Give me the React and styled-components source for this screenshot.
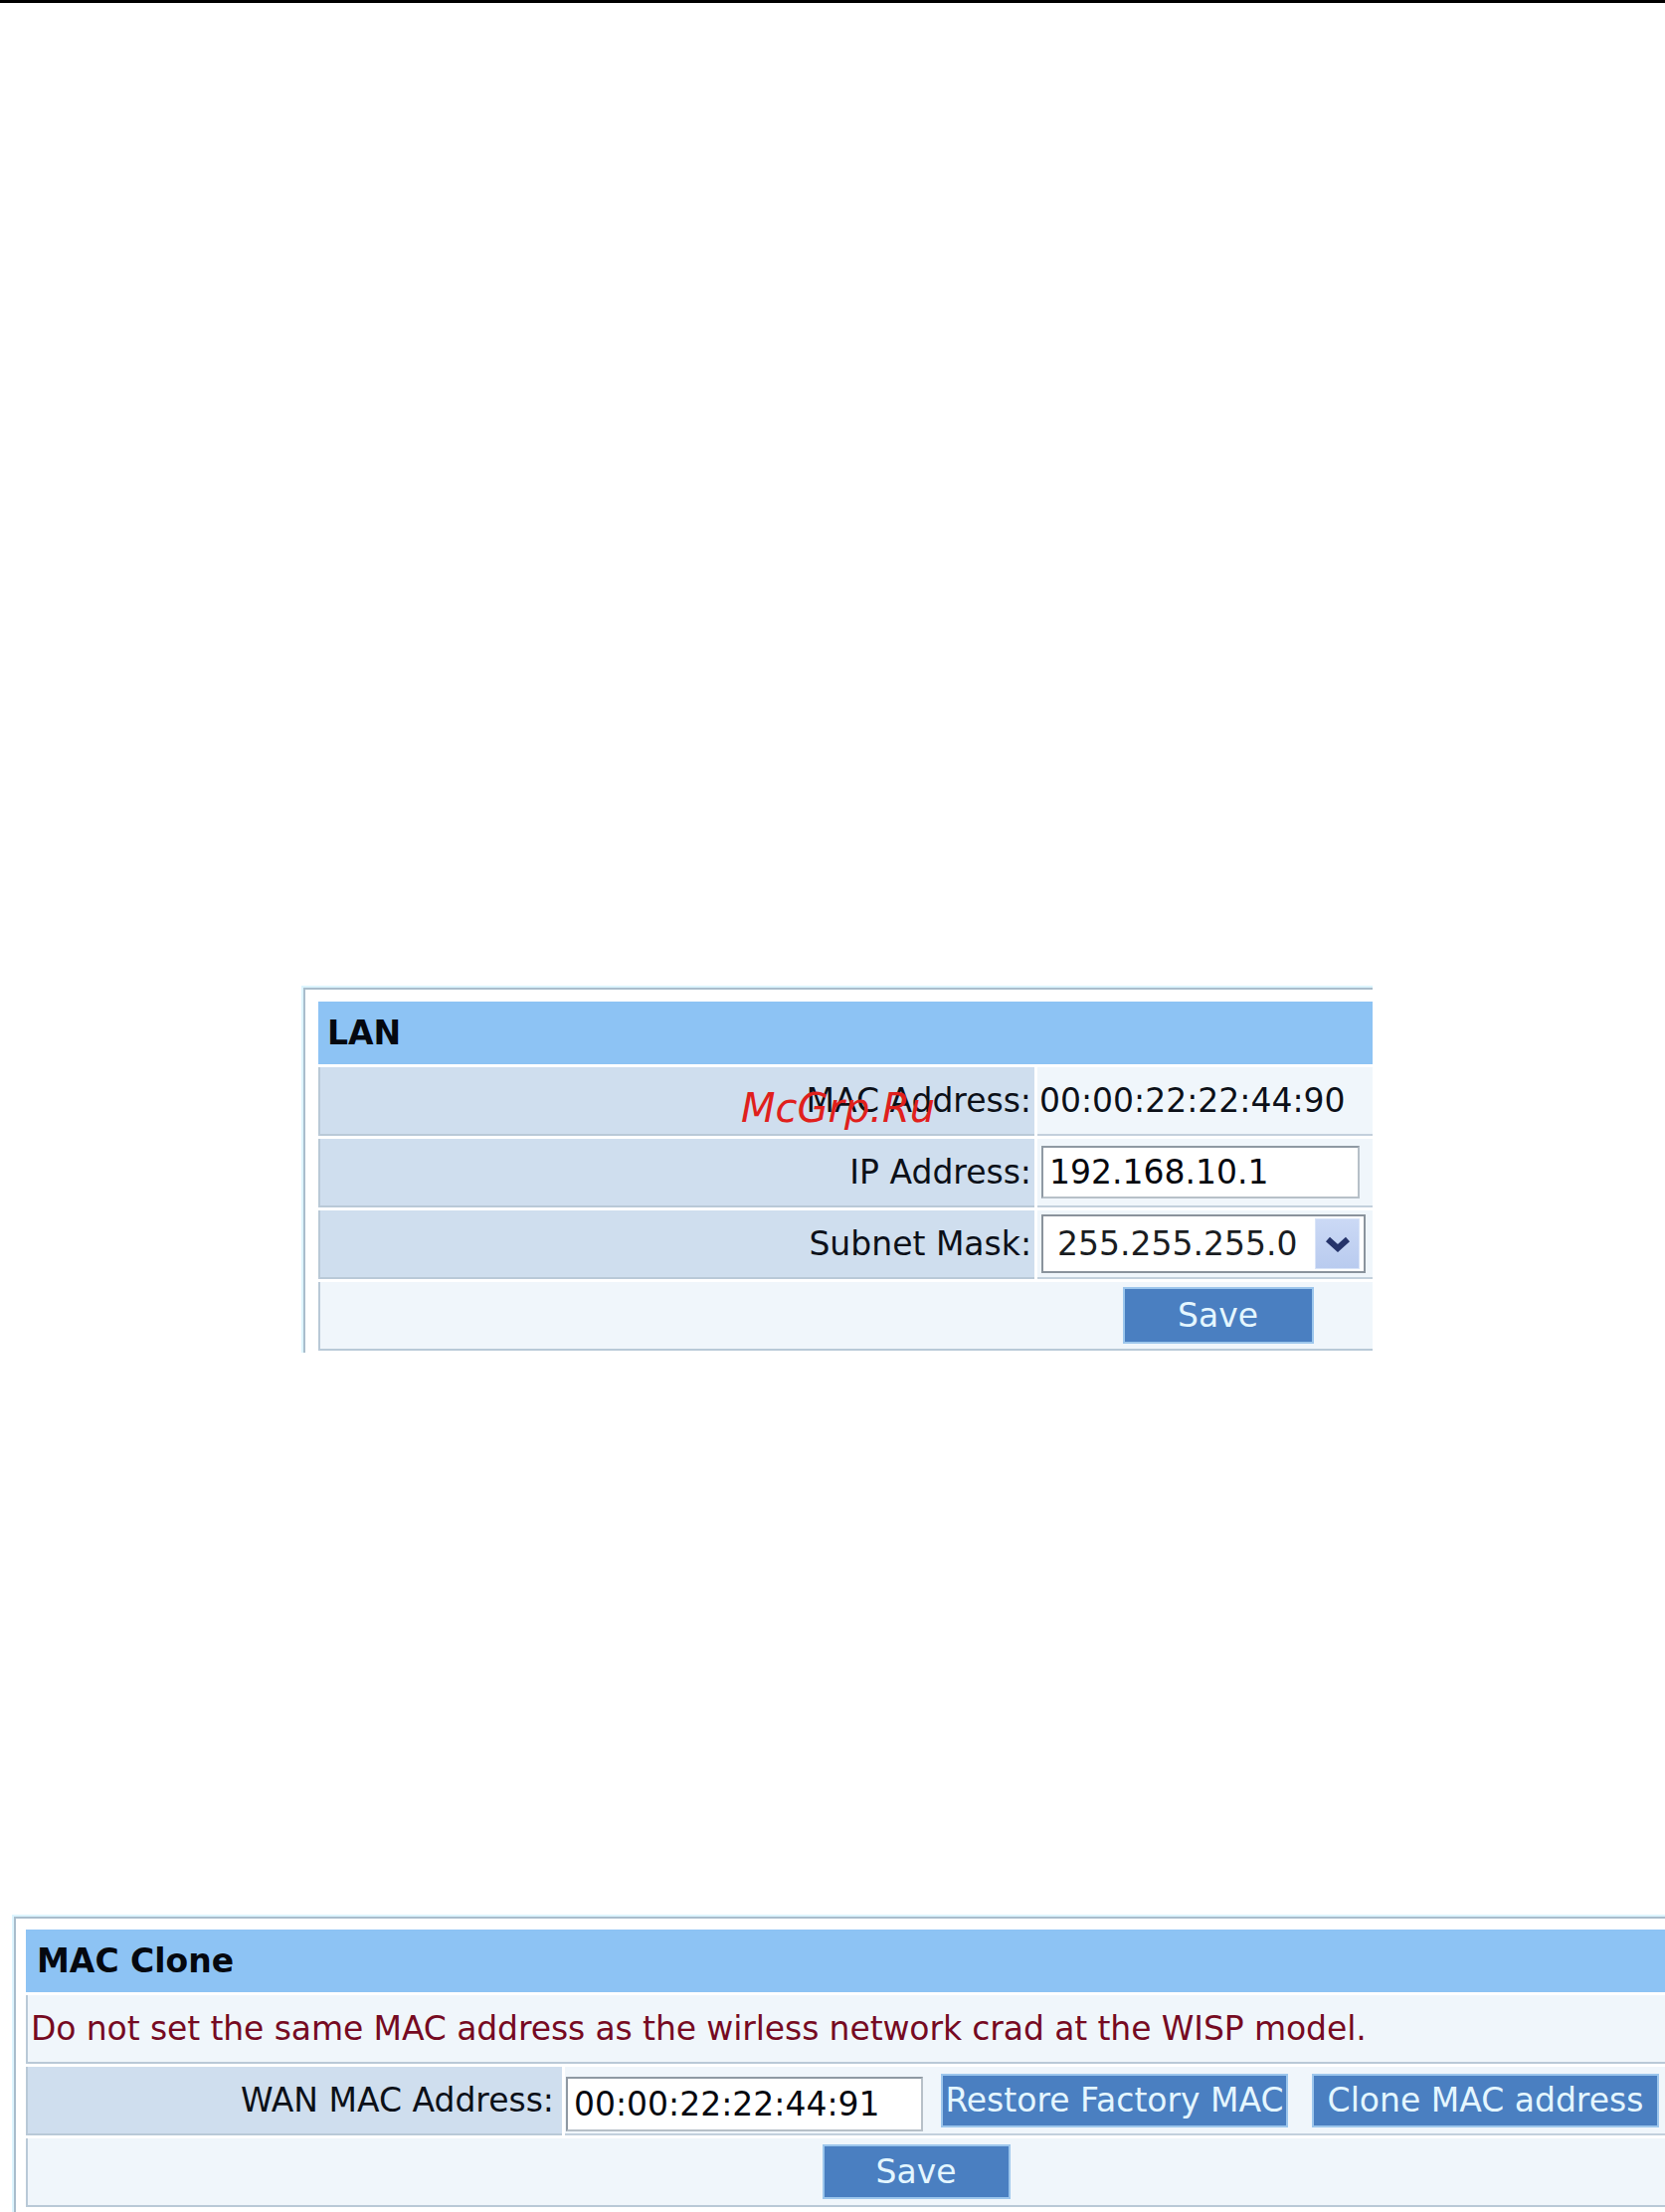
import React from "react";
import styled, { createGlobalStyle } from "styled-components";

const GlobalStyle = createGlobalStyle`
  html, body {
    margin: 0;
    padding: 0;
    background: #ffffff;
  }
  body {
    font-family: "DejaVu Sans", Verdana, sans-serif;
    color: #0c1018;
  }
`;

const Page = styled.div`
  width: 1674px;
  height: 2224px;
  overflow: hidden;
`;

const TopRule = styled.div`
  height: 3px;
  background: #000;
`;

// window onto a settings panel, the panel itself runs past its edges
const Clip = styled.section`
  position: relative;
  box-sizing: border-box;
  width: ${p => p.$w}px;
  height: ${p => p.$h}px;
  margin: ${p => p.$top}px 0 0 ${p => p.$left}px;
  padding: 2px 0 0 2px;
  overflow: hidden;
`;

const Panel = styled.div`
  width: max-content;
  background: #fff;
  border: 2px solid #a9bdcc;
  box-shadow: 0 0 0 2px #ddf5ff;
  padding: ${p => p.$pad};
`;

const Table = styled.div`
  display: flex;
  flex-direction: column;
  gap: 3px;
  width: ${p => p.$w}px;
`;

const Title = styled.div`
  height: 63px;
  display: flex;
  align-items: center;
  padding-left: ${p => p.$indent}px;
  background: #8dc3f4;
  font-weight: bold;
  font-size: 33px;
  color: #05080f;
`;

const Row = styled.div`
  display: grid;
  grid-template-columns: ${p => p.$label}px 1fr;
  column-gap: 3px;
  height: 69px;
`;

const Label = styled.div`
  box-sizing: border-box;
  display: flex;
  align-items: center;
  justify-content: flex-end;
  padding-right: ${p => p.$pr || 3}px;
  background: #cfdeee;
  border-left: 2px solid #b9c9d7;
  border-bottom: 2px solid #b9c9d7;
  font-size: 33px;
  white-space: nowrap;
`;

const Value = styled.div`
  box-sizing: border-box;
  display: flex;
  align-items: center;
  gap: ${p => p.$gap || 0}px;
  padding-left: ${p => p.$pl || 2}px;
  background: #f0f6fb;
  border-bottom: 2px solid #c3d0dc;
  font-size: 33px;
  white-space: nowrap;
`;

const WideCell = styled.div`
  box-sizing: border-box;
  height: 69px;
  display: flex;
  align-items: center;
  justify-content: ${p => (p.$center ? "center" : "flex-start")};
  padding-left: 3px;
  background: #f0f6fb;
  border-left: 2px solid #b9c9d7;
  border-bottom: 2px solid #b9c9d7;
  font-size: 33px;
  white-space: nowrap;
`;

const Notice = styled.span`
  color: #760a22;
  letter-spacing: -0.1px;
`;

const TextBox = styled.input`
  box-sizing: border-box;
  width: ${p => p.$w}px;
  height: ${p => p.$h}px;
  margin: ${p => p.$mt || 0}px 0 0 ${p => p.$ml || 0}px;
  padding: 0 6px;
  border: 2px solid;
  border-color: #8f99a3 #b7c0c8 #b7c0c8 #8f99a3;
  background: #fff;
  font-family: "DejaVu Sans", Verdana, sans-serif;
  font-size: 33px;
  color: #05080f;
  outline: none;
`;

const SelectBox = styled.div`
  box-sizing: border-box;
  width: 326px;
  height: 59px;
  margin-left: 2px;
  display: flex;
  align-items: center;
  justify-content: space-between;
  padding: 0 4px 0 14px;
  border: 2px solid #8a939c;
  background: #fff;
  color: #1a1d22;
`;

const DropButton = styled.div`
  width: 43px;
  height: 49px;
  display: flex;
  align-items: center;
  justify-content: center;
  background: linear-gradient(#cbd9f5, #b9cbef);
  border: 1px solid #d9e4f8;
`;

const Button = styled.button`
  box-sizing: border-box;
  width: ${p => p.$w}px;
  height: ${p => p.$h}px;
  padding: 0;
  background: #4a7fc1;
  border: 2px solid #9cc6ec;
  color: #e4f6ff;
  font-family: "DejaVu Sans", Verdana, sans-serif;
  font-size: 33px;
  cursor: pointer;
`;

const Watermark = styled.span`
  position: absolute;
  left: 442px;
  top: 103px;
  font-size: 40px;
  line-height: 1;
  font-style: italic;
  color: #e0201c;
  pointer-events: none;
`;

const Chevron = () => (
  <svg width="26" height="16" viewBox="0 0 26 16">
    <path d="M3 3 L13 12 L23 3" fill="none" stroke="#25336a" strokeWidth="6" strokeLinejoin="miter" />
  </svg>
);

const LanPanel = () => (
  <Clip $w={1077} $h={369} $top={988} $left={303}>
    <Panel $pad="12px 13px 13px 13px">
      <Table $w={1804}>
        <Title $indent={9}>LAN</Title>
        <Row $label={720}>
          <Label>MAC Address:</Label>
          <Value>00:00:22:22:44:90</Value>
        </Row>
        <Row $label={720}>
          <Label>IP Address:</Label>
          <Value>
            <TextBox $w={320} $h={53} $ml={2} defaultValue="192.168.10.1" />
          </Value>
        </Row>
        <Row $label={720}>
          <Label>Subnet Mask:</Label>
          <Value>
            <SelectBox>
              <span>255.255.255.0</span>
              <DropButton>
                <Chevron />
              </DropButton>
            </SelectBox>
          </Value>
        </Row>
        <WideCell $center>
          <Button $w={192} $h={57}>Save</Button>
        </WideCell>
      </Table>
    </Panel>
    <Watermark>McGrp.Ru</Watermark>
  </Clip>
);

const MacClonePanel = () => (
  <Clip $w={1662} $h={299} $top={565} $left={12}>
    <Panel $pad="11px 10px 11px 10px">
      <Table $w={1785}>
        <Title $indent={11}>MAC Clone</Title>
        <WideCell>
          <Notice>Do not set the same MAC address as the wirless network crad at the WISP model.</Notice>
        </WideCell>
        <Row $label={539}>
          <Label $pr={8}>WAN MAC Address:</Label>
          <Value $pl={1} $gap={18}>
            <TextBox $w={359} $h={55} $mt={8} defaultValue="00:00:22:22:44:91" />
            <Button $w={349} $h={54}>Restore Factory MAC</Button>
            <Button $w={349} $h={54} style={{ marginLeft: 6 }}>Clone MAC address</Button>
          </Value>
        </Row>
        <WideCell $center>
          <Button $w={189} $h={55}>Save</Button>
        </WideCell>
      </Table>
    </Panel>
  </Clip>
);

export default function App() {
  return (
    <Page>
      <GlobalStyle />
      <TopRule />
      <LanPanel />
      <MacClonePanel />
    </Page>
  );
}
